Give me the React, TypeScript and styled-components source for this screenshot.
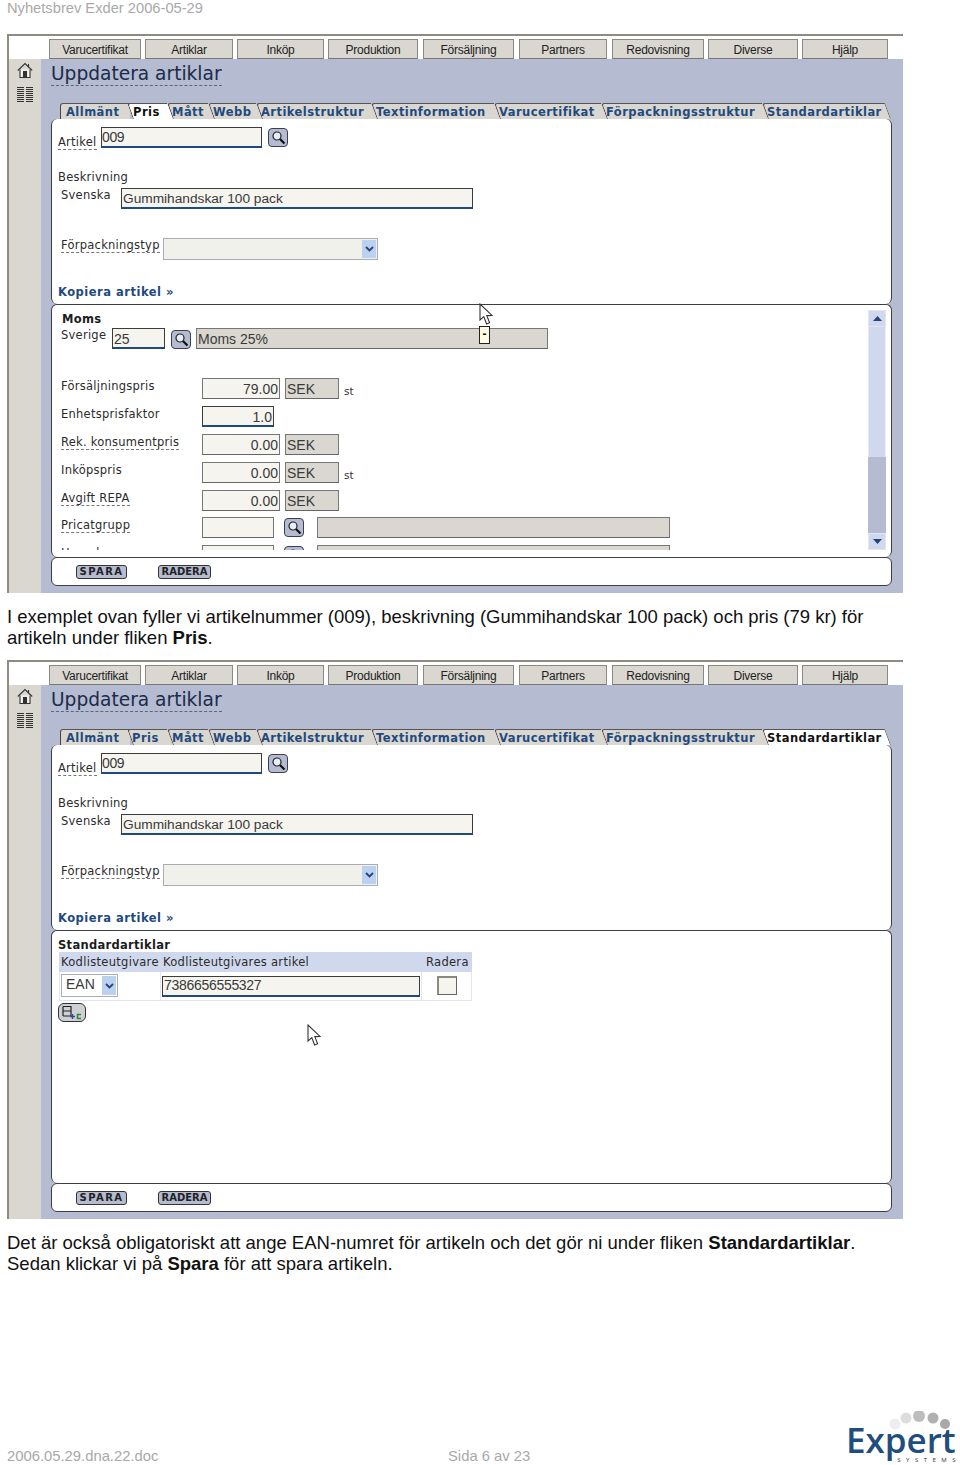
import React from "react";
import styled, {createGlobalStyle} from "styled-components";

const GlobalStyle = createGlobalStyle`
    html, body {
        margin: 0;
        padding: 0;
        background: #fff;
    }
`

const BLUE = "#b5bbd1";
const BEIGE = "#d9d7d0";
const LIGHT_BLUE = "#d0d8ee";
const NAVY = "#1f4a80";

const Page = styled.div`
    position: relative;
    width: 960px;
    height: 1465px;
    overflow: hidden;
    box-sizing: border-box;
    padding-left: 7px;
    display: flex;
    flex-direction: column;
    font-family: "Liberation Sans", Arial, sans-serif;
`

const DocHeader = styled.div`
    height: 34px;
    font-size: 14.7px;
    line-height: 16px;
    color: #a9a9a9;
`

const Paragraph = styled.p`
    margin: ${p => p.$top}px 0 ${p => p.$bottom}px;
    font-size: 18.5px;
    line-height: 21px;
    color: #111;
    white-space: nowrap;
`

const Footer = styled.div`
    margin-top: auto;
    height: 56px;
    padding-right: 3px;
    display: flex;
    align-items: flex-end;
    font-size: 14.8px;
    line-height: 16px;
    color: #a9a9a9;
`

const FooterFile = styled.span`
    width: 441px;
    margin-bottom: 1px;
`

const FooterPage = styled.span`
    margin-bottom: 1px;
`

const Logo = styled.div`
    position: relative;
    margin-left: auto;
    width: 109px;
    height: 52px;
    margin-bottom: 2px;
`

const LogoWord = styled.div`
    position: absolute;
    left: -2px;
    top: 11px;
    font-family: "Open Sans", sans-serif;
    font-weight: 600;
    font-size: 35px;
    line-height: 36px;
    color: #1f4e7e;
`

const LogoSub = styled.div`
    position: absolute;
    right: 0;
    bottom: 0;
    font-family: "Open Sans", sans-serif;
    font-size: 6px;
    line-height: 5px;
    letter-spacing: 5.5px;
    margin-right: -4px;
    color: #333;
`

const Window = styled.div`
    width: 896px;
    height: 559px;
    flex: none;
    box-sizing: border-box;
    border-top: 2px solid #8e8c82;
    border-left: 2px solid #8e8c82;
    display: flex;
    flex-direction: column;
`

const NavBar = styled.div`
    height: 23px;
    flex: none;
    box-sizing: border-box;
    padding: 3px 0 0 40px;
    display: flex;
    background: #fff;
`

const NavTab = styled.div`
    width: ${p => p.$width}px;
    margin-right: ${p => p.$gap}px;
    box-sizing: border-box;
    background: ${BEIGE};
    border: 1px solid #8a8a84;
    border-bottom: 1px solid #77777a;
    text-align: center;
    font-size: 12px;
    line-height: 20px;
    letter-spacing: -0.25px;
    color: #222;
`

const Body = styled.div`
    flex: 1;
    min-height: 0;
    display: flex;
`

const Side = styled.div`
    width: 32px;
    flex: none;
    padding-top: 3px;
    background: ${BEIGE};
    display: flex;
    flex-direction: column;
    align-items: center;
    gap: 8px;
`

const Main = styled.div`
    flex: 1;
    min-width: 0;
    box-sizing: border-box;
    background: ${BLUE};
    padding: 0 11px 8px 10px;
    display: flex;
    flex-direction: column;
`

const TitleRow = styled.div`
    height: 44px;
    flex: none;
    padding-top: 4px;
    box-sizing: border-box;
`

const Title = styled.span`
    display: inline-block;
    font-family: "DejaVu Sans", Verdana, sans-serif;
    font-size: 18.6px;
    line-height: 22px;
    color: #1b2b4b;
    border-bottom: 1px dashed #5c6580;
`

const TabStrip = styled.div`
    height: 16px;
    flex: none;
    padding-left: 9px;
    display: flex;
`

const SubTab = styled.div`
    position: relative;
    isolation: isolate;
    width: ${p => p.$width}px;
    flex: none;
    box-sizing: border-box;
    padding: 2px 0 0 ${p => p.$first ? 6 : p.$active && !p.$last ? 3 : 2}px;
    font-family: "DejaVu Sans", Verdana, sans-serif;
    font-weight: 700;
    font-size: 11.5px;
    line-height: 14px;
    letter-spacing: 0.45px;
    white-space: nowrap;
    color: ${p => p.$active ? "#111" : NAVY};

    &::before {
        content: "";
        position: absolute;
        z-index: -1;
        inset: 0;
        background: ${p => p.$active ? "#fff" : BEIGE};
        border-top: 1px solid #555;
        border-left: 1px solid #444;
        border-top-left-radius: 3px;
        transform: ${p => p.$first ? "none" : "skewX(20deg)"};
        ${p => p.$last && "border-right: 1px solid #666;"}
    }
`

const Panel = styled.div`
    position: relative;
    height: ${p => p.$height}px;
    flex: none;
    box-sizing: border-box;
    background: #fff;
    border: 1.5px solid #3d3d44;
    border-top-width: ${p => p.$open ? 0 : 1.5}px;
    border-bottom-width: ${p => p.$joined ? 0 : 1.5}px;
    border-radius: 6px;
`

const IdentityPanel = styled(Panel)`
    padding: 8px 0 0 6px;
`

const ScrollPanel = styled(Panel)`
    padding: 5px 5px 7px 8px;
    display: flex;
`

const ActionPanel = styled(Panel)`
    padding-left: 24px;
    display: flex;
    align-items: center;
    gap: 31px;
`

const Row = styled.div`
    display: flex;
    align-items: ${p => p.$align || "flex-start"};
    margin-top: ${p => p.$top || 0}px;
    height: ${p => p.$height}px;
    padding-left: ${p => p.$indent || 0}px;
`

const Label = styled.span`
    font-family: "DejaVu Sans", Verdana, sans-serif;
    font-size: 11.5px;
    line-height: 14px;
    letter-spacing: 0.25px;
    color: #2b2b2b;
    white-space: nowrap;
`

const HintLabel = styled.span`
    font-family: "DejaVu Sans", Verdana, sans-serif;
    font-size: 11.5px;
    line-height: 13px;
    letter-spacing: 0.25px;
    color: #2b2b2b;
    white-space: nowrap;
    border-bottom: 1px dashed #777;
`

const LabelCell = styled.div`
    width: ${p => p.$width}px;
    flex: none;
    margin-top: ${p => p.$top || 0}px;
`

const BoldLabel = styled.div`
    margin: ${p => p.$top || 0}px 0 0 ${p => p.$indent || 0}px;
    font-family: "DejaVu Sans", Verdana, sans-serif;
    font-weight: 700;
    font-size: 11.5px;
    line-height: 14px;
    letter-spacing: 0.3px;
    color: #1c1c1c;
`

const CopyLink = styled.div`
    font-family: "DejaVu Sans", Verdana, sans-serif;
    font-weight: 700;
    font-size: 11.5px;
    line-height: 14px;
    letter-spacing: 0.5px;
    color: ${NAVY};
`

const Field = styled.div`
    width: ${p => p.$width}px;
    height: ${p => p.$height || 21}px;
    flex: none;
    margin-left: ${p => p.$left || 0}px;
    box-sizing: border-box;
    background: ${p => p.$readOnly ? BEIGE : "#f5f4ef"};
    border: 1px solid ${p => p.$focused ? "#3c3c3c" : "#777"};
    border-bottom: ${p => p.$focused ? `2px solid ${NAVY}` : "1px solid #666"};
    padding: 0 1px 0 ${p => p.$flush ? 0 : 1}px;
    font-size: ${p => p.$size || 14}px;
    line-height: ${p => p.$leading || 20}px;
    letter-spacing: ${p => p.$spacing || 0}px;
    color: #3a3a3a;
    text-align: ${p => p.$right ? "right" : "left"};
    white-space: nowrap;
    overflow: hidden;
`

const SearchButton = styled.button`
    width: 20px;
    height: 19px;
    flex: none;
    margin: ${p => p.$top || 0}px 0 0 ${p => p.$left || 0}px;
    padding: 0;
    box-sizing: border-box;
    display: flex;
    align-items: center;
    justify-content: center;
    background: ${BLUE};
    border: 1.5px solid #3a3f52;
    border-radius: 4px;
`

const SelectBox = styled.div`
    width: ${p => p.$width}px;
    height: ${p => p.$height}px;
    flex: none;
    margin-left: ${p => p.$left || 0}px;
    box-sizing: border-box;
    display: flex;
    justify-content: flex-end;
    align-items: center;
    padding: 1px;
    background: ${p => p.$plain ? "#fff" : "#f1f1ec"};
    border: 1px solid #a9adb8;
    font-size: 14px;
    line-height: 17px;
    color: #3a3a3a;
`

const SelectText = styled.span`
    margin: 0 auto 2px 0;
    padding-left: 3px;
`

const SelectArrow = styled.span`
    width: 14px;
    height: 100%;
    display: flex;
    align-items: center;
    justify-content: center;
    background: #bcd0f0;
`

const ScrollContent = styled.div`
    flex: 1;
    min-width: 0;
    overflow: hidden;
`

const PriceList = styled.div`
    margin-top: 29px;
    display: flex;
    flex-direction: column;
    gap: 6.9px;
`

const PriceRow = styled.div`
    display: flex;
    height: 21px;
    padding-left: 1px;
`

const Unit = styled.span`
    margin: 6px 0 0 5px;
    font-family: "DejaVu Sans", Verdana, sans-serif;
    font-size: 10.5px;
    line-height: 14px;
    color: #333;
`

const ScrollBar = styled.div`
    width: 18px;
    flex: none;
    display: flex;
    flex-direction: column;
`

const ScrollArrow = styled.div`
    height: 17px;
    flex: none;
    display: flex;
    align-items: center;
    justify-content: center;
    background: ${LIGHT_BLUE};
    border: 1px solid #e2e6f2;
    box-sizing: border-box;
`

const ScrollTrack = styled.div`
    flex: 1;
    background: ${LIGHT_BLUE};
    border-left: 1px solid #e8ebf5;
    border-right: 1px solid #e8ebf5;
`

const ScrollThumb = styled.div`
    height: 76px;
    flex: none;
    background: ${BLUE};
`

const ActionButton = styled.button`
    height: 14px;
    width: ${p => p.$width}px;
    padding: 0;
    box-sizing: border-box;
    background: ${BLUE};
    border: 1.5px solid #333;
    border-radius: 3px;
    font-family: "DejaVu Sans", Verdana, sans-serif;
    font-weight: 700;
    font-size: 10px;
    line-height: 11px;
    letter-spacing: ${p => p.$spacing}px;
    color: #222;
`

const Cursor = styled.svg`
    position: absolute;
    left: ${p => p.$x}px;
    top: ${p => p.$y}px;
`

const Tip = styled.div`
    position: absolute;
    left: 427px;
    top: 21px;
    width: 11px;
    height: 18px;
    box-sizing: border-box;
    background: #fdfbe3;
    border: 1.5px solid #222;
    font-size: 12px;
    font-weight: 700;
    line-height: 15px;
    text-align: center;
    color: #111;
`

const EanTable = styled.div`
    width: 413px;
    margin-left: 1px;
    display: grid;
    grid-template-columns: 102px 261px 50px;
`

const HeadCell = styled.div`
    height: 20px;
    padding-left: ${p => p.$indent || 2}px;
    background: ${LIGHT_BLUE};
    font-family: "DejaVu Sans", Verdana, sans-serif;
    font-size: 11.5px;
    line-height: 20px;
    letter-spacing: 0.3px;
    color: #2b2b2b;
    white-space: nowrap;
`

const BodyCell = styled.div`
    height: 29px;
    box-sizing: border-box;
    border: 1px solid #e3e6f0;
    border-top: 0;
    border-left-width: ${p => p.$first ? 1 : 0}px;
    padding: ${p => p.$top || 2}px 0 0 ${p => p.$indent || 1}px;
    display: flex;
`

const CheckBox = styled.div`
    width: 20px;
    height: 19px;
    box-sizing: border-box;
    background: #f5f4ef;
    border: 1px solid #666;
    border-top: 2px solid #8a8a84;
    border-left: 2px solid #8a8a84;
`

const AddRowButton = styled.button`
    width: 28px;
    height: 19px;
    margin-top: 2px;
    padding: 0;
    display: flex;
    align-items: center;
    justify-content: center;
    background: #cfd0d4;
    border: 1.5px solid #333;
    border-radius: 6px;
`

const HomeIcon = () => <svg width="16" height="17" viewBox="0 0 16 17" fill="none" stroke="#333" strokeWidth="1.1">
    <path d="M0.8 8.5 L8 1.5 L15.2 8.5"/>
    <path d="M11.5 2 V5"/>
    <path d="M3 7.5 V15.5 H13 V7.5" fill="#f4f4f0"/>
    <rect x="6.5" y="9.5" width="3" height="6" fill="#333"/>
</svg>

const ListIcon = () => <svg width="16" height="15" viewBox="0 0 16 15" stroke="#333" strokeWidth="1">
    {[0.5, 2.5, 4.5, 6.5, 8.5, 10.5, 12.5, 14.5].map(y => <g key={y}>
        <line x1="0" x2="7" y1={y} y2={y}/>
        <line x1="9" x2="16" y1={y} y2={y}/>
    </g>)}
</svg>

const GlassIcon = () => <svg width="15" height="15" viewBox="0 0 15 15" fill="none">
    <circle cx="6" cy="6" r="4" fill="#e8eef8" stroke="#222" strokeWidth="1.2"/>
    <path d="M9 9 L13.5 13.5" stroke="#111" strokeWidth="2.2"/>
</svg>

const ChevronIcon = () => <svg width="9" height="6" viewBox="0 0 9 6" fill="none">
    <path d="M1 1 L4.5 4.5 L8 1" stroke="#24447a" strokeWidth="1.8"/>
</svg>

const ArrowIcon = ({up}: { up: boolean }) => <svg width="9" height="5" viewBox="0 0 9 5">
    <path d={up ? "M4.5 0 L9 5 H0 Z" : "M0 0 H9 L4.5 5 Z"} fill="#24447a"/>
</svg>

const PointerIcon = ({x, y}: { x: number; y: number }) => <Cursor $x={x} $y={y} width="15" height="23" viewBox="0 0 15 23">
    <path d="M1 1 V17 L4.8 13.6 L7.6 21 L10.6 19.8 L7.8 12.6 L13 12.4 Z" fill="#fff" stroke="#333" strokeWidth="1.1"/>
</Cursor>

const AddRowIcon = () => <svg width="22" height="15" viewBox="0 0 22 15" fill="none">
    <path d="M2 1.5 H10 V11 H2 M2 1.5 V11 M2 6 H10" stroke="#222" strokeWidth="1.2"/>
    <path d="M9 11.5 H14 M11.5 9 V14" stroke="#2a4f96" strokeWidth="1.4"/>
    <path d="M20 9.5 H16.5 V13.5 H20" stroke="#2d8a3a" strokeWidth="1.6"/>
</svg>

const LogoDots = () => <svg width="70" height="22" viewBox="0 0 70 22">
    <circle cx="8" cy="13" r="5.5" fill="#eeeeee"/>
    <circle cx="19" cy="7" r="5.5" fill="#dddddd"/>
    <circle cx="32" cy="5" r="6" fill="#bdbdbd"/>
    <circle cx="46" cy="7" r="5.5" fill="#b0b0b0"/>
    <circle cx="58" cy="13" r="5" fill="#a8a8a8"/>
</svg>

const LogoMark = styled.div`
    position: absolute;
    left: 39px;
    top: 0;
    height: 22px;
`

const navItems = [
    {name: "Varucertifikat", width: 92, gap: 4},
    {name: "Artiklar", width: 88, gap: 4},
    {name: "Inköp", width: 87, gap: 4},
    {name: "Produktion", width: 90, gap: 5},
    {name: "Försäljning", width: 91, gap: 5},
    {name: "Partners", width: 88, gap: 5},
    {name: "Redovisning", width: 92, gap: 4},
    {name: "Diverse", width: 90, gap: 4},
    {name: "Hjälp", width: 86, gap: 0},
];

const subTabs = [
    {name: "Allmänt", width: 70},
    {name: "Pris", width: 40},
    {name: "Mått", width: 41},
    {name: "Webb", width: 48},
    {name: "Artikelstruktur", width: 115},
    {name: "Textinformation", width: 123},
    {name: "Varucertifikat", width: 107},
    {name: "Förpackningsstruktur", width: 161},
    {name: "Standardartiklar", width: 123},
];

const priceRows = [
    {label: "Försäljningspris", value: "79.00", width: 78, currency: true, unit: "st"},
    {label: "Enhetsprisfaktor", value: "1.0", width: 72, focused: true},
    {label: "Rek. konsumentpris", value: "0.00", width: 78, currency: true, hint: true},
    {label: "Inköpspris", value: "0.00", width: 78, currency: true, unit: "st"},
    {label: "Avgift REPA", value: "0.00", width: 78, currency: true, hint: true},
];

function ArticleWindow({activeTab, children}: { activeTab: string; children: React.ReactNode }) {
    return <Window>
        <NavBar>
            {navItems.map(item => <NavTab key={item.name} $width={item.width} $gap={item.gap}>{item.name}</NavTab>)}
        </NavBar>
        <Body>
            <Side>
                <HomeIcon/>
                <ListIcon/>
            </Side>
            <Main>
                <TitleRow><Title>Uppdatera artiklar</Title></TitleRow>
                <TabStrip>
                    {subTabs.map((tab, i) => <SubTab
                        key={tab.name}
                        $width={tab.width}
                        $first={i === 0}
                        $last={i === subTabs.length - 1}
                        $active={tab.name === activeTab}
                    >{tab.name}</SubTab>)}
                </TabStrip>
                <IdentityPanel $height={185} $open $joined>
                    <Row $height={21}>
                        <LabelCell $width={43} $top={5}><HintLabel>Artikel</HintLabel></LabelCell>
                        <Field $width={161} $focused $flush $spacing={-0.4} $leading={18}>009</Field>
                        <SearchButton $left={6} $top={1}><GlassIcon/></SearchButton>
                    </Row>
                    <Row $height={14} $top={22}><Label>Beskrivning</Label></Row>
                    <Row $height={21} $top={4} $indent={3}>
                        <LabelCell $width={60} $top={-3}><Label>Svenska</Label></LabelCell>
                        <Field $width={352} $focused $size={13.7}>Gummihandskar 100 pack</Field>
                    </Row>
                    <Row $height={22} $top={29} $indent={3}>
                        <LabelCell $width={102} $top={-3}><HintLabel>Förpackningstyp</HintLabel></LabelCell>
                        <SelectBox $width={215} $height={22}><SelectArrow><ChevronIcon/></SelectArrow></SelectBox>
                    </Row>
                    <Row $height={14} $top={25}><CopyLink>Kopiera artikel »</CopyLink></Row>
                </IdentityPanel>
                {children}
                <ActionPanel $height={29}>
                    <ActionButton $width={51} $spacing={1.4}>SPARA</ActionButton>
                    <ActionButton $width={53} $spacing={0}>RADERA</ActionButton>
                </ActionPanel>
            </Main>
        </Body>
    </Window>
}

function PricePanel() {
    return <ScrollPanel $height={253} $joined>
        <ScrollContent>
            <BoldLabel $top={2} $indent={2}>Moms</BoldLabel>
            <Row $height={21} $top={2} $indent={1}>
                <LabelCell $width={51} $top={-3}><Label>Sverige</Label></LabelCell>
                <Field $width={53} $focused>25</Field>
                <SearchButton $left={6} $top={2}><GlassIcon/></SearchButton>
                <Field $width={352} $left={5} $readOnly>Moms 25%</Field>
            </Row>
            <PriceList>
                {priceRows.map(row => <PriceRow key={row.label}>
                    <LabelCell $width={141} $top={-2}>
                        {row.hint ? <HintLabel>{row.label}</HintLabel> : <Label>{row.label}</Label>}
                    </LabelCell>
                    <Field $width={row.width} $right $focused={row.focused}>{row.value}</Field>
                    {row.currency && <Field $width={54} $left={5} $readOnly>SEK</Field>}
                    {row.unit && <Unit>{row.unit}</Unit>}
                </PriceRow>)}
                <PriceRow>
                    <LabelCell $width={141} $top={-2}><HintLabel>Pricatgrupp</HintLabel></LabelCell>
                    <Field $width={72}/>
                    <SearchButton $left={10} $top={1}><GlassIcon/></SearchButton>
                    <Field $width={353} $left={13} $readOnly/>
                </PriceRow>
                <PriceRow>
                    <LabelCell $width={141} $top={-2}><HintLabel>Huvudgrupp</HintLabel></LabelCell>
                    <Field $width={72}/>
                    <SearchButton $left={10} $top={1}><GlassIcon/></SearchButton>
                    <Field $width={353} $left={13} $readOnly/>
                </PriceRow>
            </PriceList>
        </ScrollContent>
        <ScrollBar>
            <ScrollArrow><ArrowIcon up/></ScrollArrow>
            <ScrollTrack/>
            <ScrollThumb/>
            <ScrollArrow><ArrowIcon up={false}/></ScrollArrow>
        </ScrollBar>
        <PointerIcon x={427} y={-2}/>
        <Tip>-</Tip>
    </ScrollPanel>
}

function StandardPanel() {
    return <IdentityPanel $height={253} $joined>
        <BoldLabel $top={-1}>Standardartiklar</BoldLabel>
        <EanTable>
            <HeadCell>Kodlisteutgivare</HeadCell>
            <HeadCell>Kodlisteutgivares artikel</HeadCell>
            <HeadCell $indent={4}>Radera</HeadCell>
            <BodyCell $first>
                <SelectBox $width={57} $height={23} $plain>
                    <SelectText>EAN</SelectText>
                    <SelectArrow><ChevronIcon/></SelectArrow>
                </SelectBox>
            </BodyCell>
            <BodyCell $top={4} $indent={1}>
                <Field $width={258} $focused $spacing={-0.3} $leading={17}>7386656555327</Field>
            </BodyCell>
            <BodyCell $top={4} $indent={15}><CheckBox/></BodyCell>
        </EanTable>
        <AddRowButton><AddRowIcon/></AddRowButton>
        <PointerIcon x={255} y={93}/>
    </IdentityPanel>
}

function App() {
    return <Page>
        <GlobalStyle/>
        <DocHeader>Nyhetsbrev Exder 2006-05-29</DocHeader>
        <ArticleWindow activeTab="Pris"><PricePanel/></ArticleWindow>
        <Paragraph $top={13} $bottom={12}>
            I exemplet ovan fyller vi artikelnummer (009), beskrivning (Gummihandskar 100 pack) och pris (79 kr) för<br/>
            artikeln under fliken <b>Pris</b>.
        </Paragraph>
        <ArticleWindow activeTab="Standardartiklar"><StandardPanel/></ArticleWindow>
        <Paragraph $top={13} $bottom={0}>
            Det är också obligatoriskt att ange EAN-numret för artikeln och det gör ni under fliken <b>Standardartiklar</b>.<br/>
            Sedan klickar vi på <b>Spara</b> för att spara artikeln.
        </Paragraph>
        <Footer>
            <FooterFile>2006.05.29.dna.22.doc</FooterFile>
            <FooterPage>Sida 6 av 23</FooterPage>
            <Logo>
                <LogoMark><LogoDots/></LogoMark>
                <LogoWord>Expert</LogoWord>
                <LogoSub>SYSTEMS</LogoSub>
            </Logo>
        </Footer>
    </Page>
}

export default App;
